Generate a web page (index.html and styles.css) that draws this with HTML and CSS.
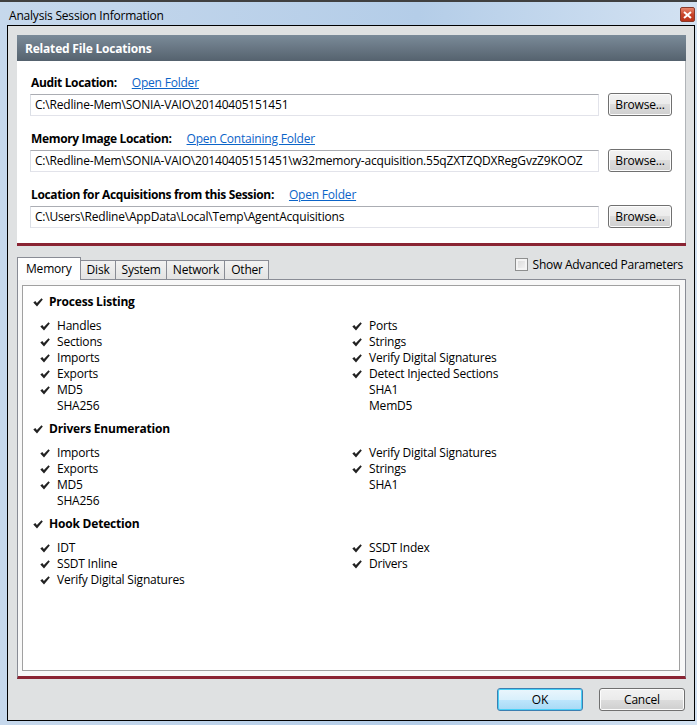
FILE: index.html
```html
<!DOCTYPE html>
<html lang="en">
<head>
    <meta charset="UTF-8">
    <title>Analysis Session Information</title>
    <link rel="stylesheet" href="styles.css">
</head>
<body>
    <div class="window">
        <!-- Title bar -->
        <div class="titlebar">
            <span class="title">Analysis Session Information</span>
            <span class="close-btn">
                <svg width="9" height="8" viewBox="0 0 9 8"><path d="M1 1 L8 7 M8 1 L1 7" stroke="#fff" stroke-width="2"/></svg>
            </span>
        </div>

        <div class="client">
            <!-- Related File Locations -->
            <div class="files-panel">
                <div class="panel-header">Related File Locations</div>
                <div class="panel-body">
                    <div class="file-row">
                        <div class="file-label"><b>Audit Location:</b><a href="#">Open Folder</a></div>
                        <div class="file-input-row">
                            <div class="text-input">C:\Redline-Mem\SONIA-VAIO\20140405151451</div>
                            <button class="btn">Browse...</button>
                        </div>
                    </div>
                    <div class="file-row">
                        <div class="file-label"><b>Memory Image Location:</b><a href="#">Open Containing Folder</a></div>
                        <div class="file-input-row">
                            <div class="text-input">C:\Redline-Mem\SONIA-VAIO\20140405151451\w32memory-acquisition.55qZXTZQDXRegGvzZ9KOOZ</div>
                            <button class="btn">Browse...</button>
                        </div>
                    </div>
                    <div class="file-row">
                        <div class="file-label"><b>Location for Acquisitions from this Session:</b><a href="#">Open Folder</a></div>
                        <div class="file-input-row">
                            <div class="text-input">C:\Users\Redline\AppData\Local\Temp\AgentAcquisitions</div>
                            <button class="btn">Browse...</button>
                        </div>
                    </div>
                </div>
            </div>

            <!-- Tabs -->
            <div class="tab-strip">
                <div class="tabs">
                    <span class="tab active">Memory</span>
                    <span class="tab">Disk</span>
                    <span class="tab">System</span>
                    <span class="tab">Network</span>
                    <span class="tab">Other</span>
                </div>
                <label class="advanced"><span class="checkbox"></span>Show Advanced Parameters</label>
            </div>

            <div class="tab-panel">
                <div class="options">
                    <div class="group">
                        <div class="group-title"><span class="check"></span>Process Listing</div>
                        <div class="items">
                            <div class="item on">Handles</div>
                            <div class="item on">Ports</div>
                            <div class="item on">Sections</div>
                            <div class="item on">Strings</div>
                            <div class="item on">Imports</div>
                            <div class="item on">Verify Digital Signatures</div>
                            <div class="item on">Exports</div>
                            <div class="item on">Detect Injected Sections</div>
                            <div class="item on">MD5</div>
                            <div class="item">SHA1</div>
                            <div class="item">SHA256</div>
                            <div class="item">MemD5</div>
                        </div>
                    </div>
                    <div class="group">
                        <div class="group-title"><span class="check"></span>Drivers Enumeration</div>
                        <div class="items">
                            <div class="item on">Imports</div>
                            <div class="item on">Verify Digital Signatures</div>
                            <div class="item on">Exports</div>
                            <div class="item on">Strings</div>
                            <div class="item on">MD5</div>
                            <div class="item">SHA1</div>
                            <div class="item">SHA256</div>
                        </div>
                    </div>
                    <div class="group">
                        <div class="group-title"><span class="check"></span>Hook Detection</div>
                        <div class="items">
                            <div class="item on">IDT</div>
                            <div class="item on">SSDT Index</div>
                            <div class="item on">SSDT Inline</div>
                            <div class="item on">Drivers</div>
                            <div class="item on">Verify Digital Signatures</div>
                        </div>
                    </div>
                </div>
            </div>

            <!-- Dialog buttons -->
            <div class="dialog-buttons">
                <button class="btn dlg default">OK</button>
                <button class="btn dlg">Cancel</button>
            </div>
        </div>
    </div>
</body>
</html>
```

FILE: styles.css
```css
/* Page */
body {
    margin: 0;
    font-family: "Open Sans", "Liberation Sans", sans-serif;
    font-size: 12px;
    color: #000;
}

/* Window frame */
.window {
    width: 697px;
    height: 725px;
    box-sizing: border-box;
    border-top: 2px solid #404040;
    background: linear-gradient(to right, #c6d8ec, #b4cde8 60%, #d3e2f2);
    padding: 0 2px 4px 7px;
    display: flex;
    flex-direction: column;
}

.titlebar {
    height: 23px;
    flex-shrink: 0;
    display: flex;
    align-items: center;
    justify-content: space-between;
}

.title {
    margin-left: 2px;
    margin-top: 3px;
    letter-spacing: -0.2px;
}

.close-btn {
    width: 15px;
    height: 15px;
    margin-top: 2px;
    border: 1px solid #8a3a2a;
    border-radius: 2px;
    background: linear-gradient(#e8876e, #c9452a 50%, #b8331a);
    display: flex;
    align-items: center;
    justify-content: center;
    box-sizing: border-box;
}

/* Client area */
.client {
    flex-grow: 1;
    min-height: 0;
    border: 1px solid #000;
    background-color: #dfe1e2;
    padding: 9px 8px 9px 9px;
    display: flex;
    flex-direction: column;
}

/* File locations panel */
.files-panel {
    flex-shrink: 0;
    background-color: #fff;
    border-bottom: 3px solid #8a2433;
}

.panel-header {
    height: 26px;
    line-height: 28px;
    padding-left: 8px;
    color: #fff;
    font-weight: bold;
    background: linear-gradient(#7b8b99, #55626e);
    letter-spacing: -0.2px;
}

.panel-body {
    height: 182px;
    box-sizing: border-box;
    padding: 11px 13px 0 13px;
    border-right: 1px solid #b0b4b8;
}

.file-row {
    margin-bottom: 12px;
}

.file-label {
    height: 20px;
    line-height: 21px;
    padding-left: 1px;
    margin-bottom: 1px;
}

.file-label b {
    letter-spacing: -0.35px;
}

.file-label a {
    color: #0b64c8;
    margin-left: 15px;
    letter-spacing: -0.2px;
}

.file-input-row {
    height: 23px;
    display: flex;
    align-items: center;
    gap: 9px;
}

.text-input {
    flex-grow: 1;
    height: 22px;
    margin-top: 1px;
    line-height: 20px;
    box-sizing: border-box;
    padding-left: 4px;
    border: 1px solid #e2e3ea;
    border-top-color: #abadb3;
    border-left-color: #dbdfe6;
    white-space: nowrap;
    overflow: hidden;
    letter-spacing: -0.2px;
}

/* Buttons */
.btn {
    font-family: inherit;
    font-size: 12px;
    height: 23px;
    width: 64px;
    padding: 0;
    border: 1px solid #707070;
    border-radius: 3px;
    background: linear-gradient(#f2f2f2, #ebebeb 50%, #dddddd 50%, #cfcfcf);
    box-shadow: inset 0 0 0 1px #fcfcfc;
    color: #000;
    letter-spacing: -0.2px;
}

/* Tab strip */
.tab-strip {
    flex-shrink: 0;
    margin-top: 11px;
    height: 22px;
    display: flex;
    justify-content: space-between;
    align-items: flex-end;
}

.tabs {
    display: flex;
    align-items: flex-end;
}

.tab {
    height: 19px;
    line-height: 18px;
    padding: 0 5px 0 6px;
    box-sizing: border-box;
    border: 1px solid #898c95;
    border-bottom: none;
    margin-left: -1px;
    background: linear-gradient(#f2f2f2, #e3e3e3);
    letter-spacing: -0.2px;
}

.tab.active {
    height: 23px;
    line-height: 22px;
    margin-left: 0;
    padding: 0 8px 0 8px;
    background: #fff;
    position: relative;
    top: 1px;
    z-index: 1;
}

.advanced {
    display: flex;
    align-items: center;
    height: 22px;
    margin-bottom: 4px;
    margin-right: 3px;
    letter-spacing: -0.25px;
}

.checkbox {
    width: 13px;
    height: 13px;
    box-sizing: border-box;
    border: 1px solid #8e8f8f;
    background: linear-gradient(135deg, #d8d8d8, #f6f6f6);
    box-shadow: inset 0 0 0 2px #f4f4f4;
    margin-right: 5px;
}

/* Tab panel */
.tab-panel {
    height: 400px;
    flex-shrink: 0;
    box-sizing: border-box;
    border: 1px solid #898c95;
    border-bottom: 3px solid #8a2433;
    background-color: #f8f8f8;
    padding: 5px 5px 5px 4px;
}

.options {
    height: 100%;
    box-sizing: border-box;
    border: 1px solid #a0a0a0;
    background-color: #fff;
    padding: 8px 10px 0 10px;
}

.group {
    margin-bottom: 7px;
}

.group-title {
    height: 16px;
    line-height: 16px;
    font-weight: bold;
    display: flex;
    align-items: center;
    margin-bottom: 8px;
    letter-spacing: -0.2px;
}

.items {
    display: grid;
    grid-template-columns: 312px 1fr;
    padding-left: 7px;
}

.item {
    height: 16px;
    line-height: 16px;
    padding-left: 17px;
    display: flex;
    align-items: center;
    position: relative;
    letter-spacing: -0.2px;
}

.check {
    width: 10px;
    height: 9px;
    margin-right: 6px;
    background: url("data:image/svg+xml;utf8,<svg xmlns='http://www.w3.org/2000/svg' width='10' height='9' viewBox='0 0 10 9'><path d='M0.3 4.6 L2.3 3 L3.9 5 L8.5 0.3 L9.8 1.5 L4 8.5 Z' fill='%23222'/></svg>") no-repeat;
}

.item.on::before {
    content: "";
    position: absolute;
    left: 0;
    top: 4px;
    width: 10px;
    height: 9px;
    background: url("data:image/svg+xml;utf8,<svg xmlns='http://www.w3.org/2000/svg' width='10' height='9' viewBox='0 0 10 9'><path d='M0.3 4.6 L2.3 3 L3.9 5 L8.5 0.3 L9.8 1.5 L4 8.5 Z' fill='%23222'/></svg>") no-repeat;
}

/* Dialog buttons */
.dialog-buttons {
    flex-shrink: 0;
    margin-top: 9px;
    display: flex;
    justify-content: flex-end;
    gap: 16px;
    padding-right: 1px;
}

.btn.dlg {
    width: 86px;
}

.btn.default {
    border-color: #3c7fb1;
    background: linear-gradient(#eaf6fd, #d9f0fc 50%, #bee6fd 50%, #a7d9f5);
    box-shadow: inset 0 0 0 1px #48d0f7;
}
```
